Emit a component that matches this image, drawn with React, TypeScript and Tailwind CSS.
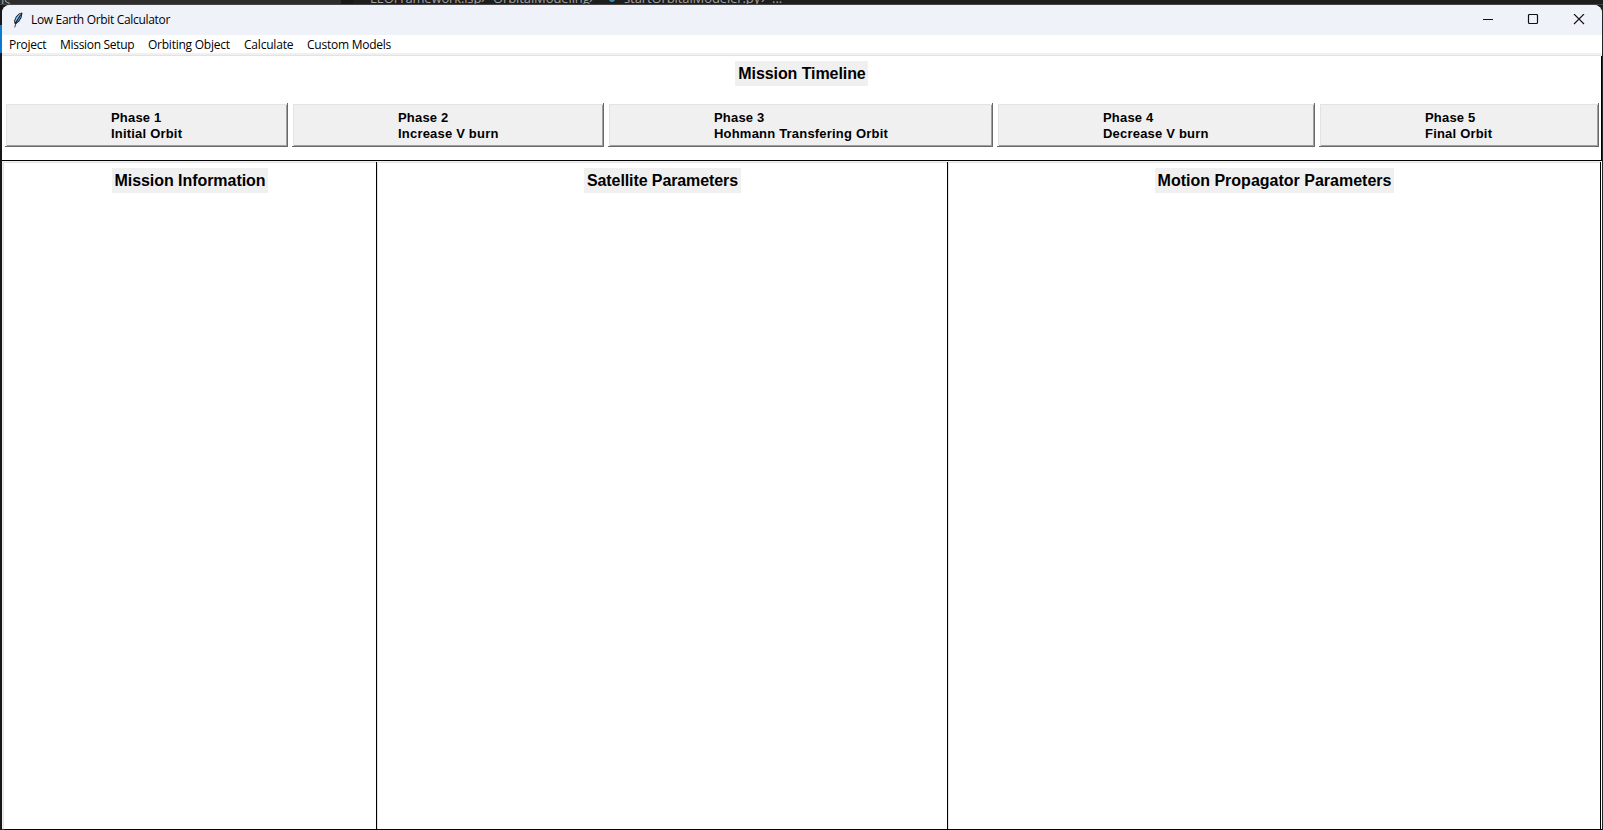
import React from "react";

const menus = [
  { label: "Project", cls: "w-[51px] tracking-[-0.28px]" },
  { label: "Mission Setup", cls: "w-[88px] tracking-[-0.3px]" },
  { label: "Orbiting Object", cls: "w-[96px] tracking-[-0.24px]" },
  { label: "Calculate", cls: "w-[63px] tracking-[-0.2px]" },
  { label: "Custom Models", cls: "w-[100px] tracking-[-0.24px]" },
];

const phases = [
  { name: "Phase 1", text: "Initial Orbit", cls: "w-[283px]" },
  { name: "Phase 2", text: "Increase V burn", cls: "w-[312px]" },
  { name: "Phase 3", text: "Hohmann Transfering Orbit", cls: "w-[385px]" },
  { name: "Phase 4", text: "Decrease V burn", cls: "w-[318px]" },
  { name: "Phase 5", text: "Final Orbit", cls: "w-[280px]" },
];

const panels = [
  { title: "Mission Information", cls: "w-[375px] pl-[110px]", label: "w-[156px] tracking-[-0.05px]" },
  { title: "Satellite Parameters", cls: "w-[571px] pl-[207px]", label: "w-[157px] tracking-[-0.1px]" },
  { title: "Motion Propagator Parameters", cls: "w-[653px] pl-[207px]", label: "w-[239px]" },
];

function Heading({ text, cls }: { text: string; cls: string }) {
  return (
    <h2 className={`h-[25px] whitespace-nowrap bg-[#f0f0f0] text-center text-[16px] font-bold leading-[25px] ${cls}`}>
      {text}
    </h2>
  );
}

function Feather() {
  return (
    <svg className="ml-[9px] h-4 w-4 shrink-0" viewBox="0 0 16 16">
      <path d="M11 .4 8 1.4 5 4.6 3.2 8.4 3.4 11.6 5 11.9 8.2 9.6 10.5 5.8 11.4 1.4Z" fill="#10151d" />
      <path d="M10.3 1.3 8.2 2.3 5.4 5.4 4.2 8.6 4.3 10.4 7.4 6Z" fill="#8fc1ec" />
      <path d="M10.5 1.8 9.7 5.6 7.6 9 5 10.9 7.4 6.4Z" fill="#4a86c8" />
      <path d="M9.5 2.8 5.6 9.2 3.7 15.4" stroke="#10151d" strokeWidth="0.8" fill="none" />
    </svg>
  );
}

export default function App() {
  return (
    <div className="flex h-[830px] w-[1603px] flex-col overflow-hidden bg-[#1c1c1c] font-['Liberation_Sans',sans-serif] text-black">
      <div className="flex h-[5px] shrink-0 overflow-hidden border-b border-[#454545] bg-[#1e1e1e] font-['Open_Sans',sans-serif] text-[13px] leading-[16px] text-[#a0a0a0]">
        <div className="h-[5px] w-[341px] bg-[#2d2d2d] pl-[1px]">
          <span className="-mt-[7px] block">js</span>
        </div>
        <div className="w-[12px] bg-[#181818]" />
        <div className="-mt-[10px] flex whitespace-pre pl-[17px]">
          <span className="w-[111px] tracking-[-0.15px]">LEOFramework.lsp</span>
          <span className="w-[12px]">›</span>
          <span className="w-[96px] tracking-[-0.1px]">OrbitalModeling</span>
          <span className="w-[20px]">›</span>
          <span className="mt-[6px] mr-[9px] h-[6px] w-[6px] rounded-full bg-[#3b8bb5]" />
          <span className="w-[137px] tracking-[-0.1px]">startOrbitalModeler.py</span>
          <span className="w-[11px]">›</span>
          <span>...</span>
        </div>
      </div>
      <div className="flex min-h-0 grow">
        <div className="flex w-[2px] shrink-0 flex-col bg-[#17171b]">
          <div className="mt-[20px] h-[28px] bg-[#0a7ad1]" />
        </div>
        <main className="flex w-[1600px] flex-col overflow-hidden rounded-tl-lg rounded-tr-lg rounded-bl-[3px] bg-white">
          <header className="flex h-[30px] shrink-0 items-center bg-[#f0f2f9]">
            <Feather />
            <h1 className="ml-[4px] font-['Open_Sans',sans-serif] text-[12px] tracking-[-0.32px]">Low Earth Orbit Calculator</h1>
            <svg className="ml-auto mr-[17px] h-[12px] w-[102px]" viewBox="0 0 102 12" fill="none" stroke="#111">
              <path d="M0 5.5h10" />
              <rect x="45.5" y="0.5" width="9" height="9" rx="1" strokeWidth="1.2" />
              <path d="m91 0 10 10m0-10L91 10" strokeWidth="1.1" />
            </svg>
          </header>
          <nav className="flex h-[18px] shrink-0 items-center whitespace-nowrap pl-[7px] pt-[2px] font-['Open_Sans',sans-serif] text-[12px]">
            {menus.map((m) => (
              <span key={m.label} className={m.cls}>{m.label}</span>
            ))}
          </nav>
          <div className="h-[3px] shrink-0 border-b border-[#e3e3e3] bg-[#f0f0f0]" />
          <section className="flex h-[105px] shrink-0 flex-col border-r border-b border-black">
            <Heading text="Mission Timeline" cls="ml-[733px] mt-[5px] w-[133px] pl-px tracking-[-0.08px]" />
            <div className="mt-[17px] flex gap-[4px] pl-[3px]">
              {phases.map((p) => (
                <button
                  key={p.name}
                  className={`flex h-[44px] shrink-0 flex-col border-r border-b border-[#696969] bg-[#f0f0f0] pl-[106px] pt-[7px] text-left text-[13px] font-bold leading-[16px] tracking-[0.2px] shadow-[inset_1px_1px_#ffffff,inset_2px_2px_#e3e3e3,inset_-1px_-1px_#a0a0a0] ${p.cls}`}
                >
                  <span>{p.name}</span>
                  <span className="whitespace-nowrap">{p.text}</span>
                </button>
              ))}
            </div>
          </section>
          <div className="h-px shrink-0 bg-[#f0f0f0]" />
          <div className="flex min-h-0 grow border-b border-l border-b-black border-l-[#f0f0f0]">
            {panels.map((p) => (
              <section key={p.title} className={`shrink-0 border-r border-black pt-[6px] shadow-[inset_1px_1px_#e3e3e3] first:-ml-px first:border-l first:border-l-[#f0f0f0] first:pl-[109px] ${p.cls}`}>
                <Heading text={p.title} cls={p.label} />
              </section>
            ))}
          </div>
        </main>
        <div className="w-px bg-[#252525]" />
      </div>
    </div>
  );
}
